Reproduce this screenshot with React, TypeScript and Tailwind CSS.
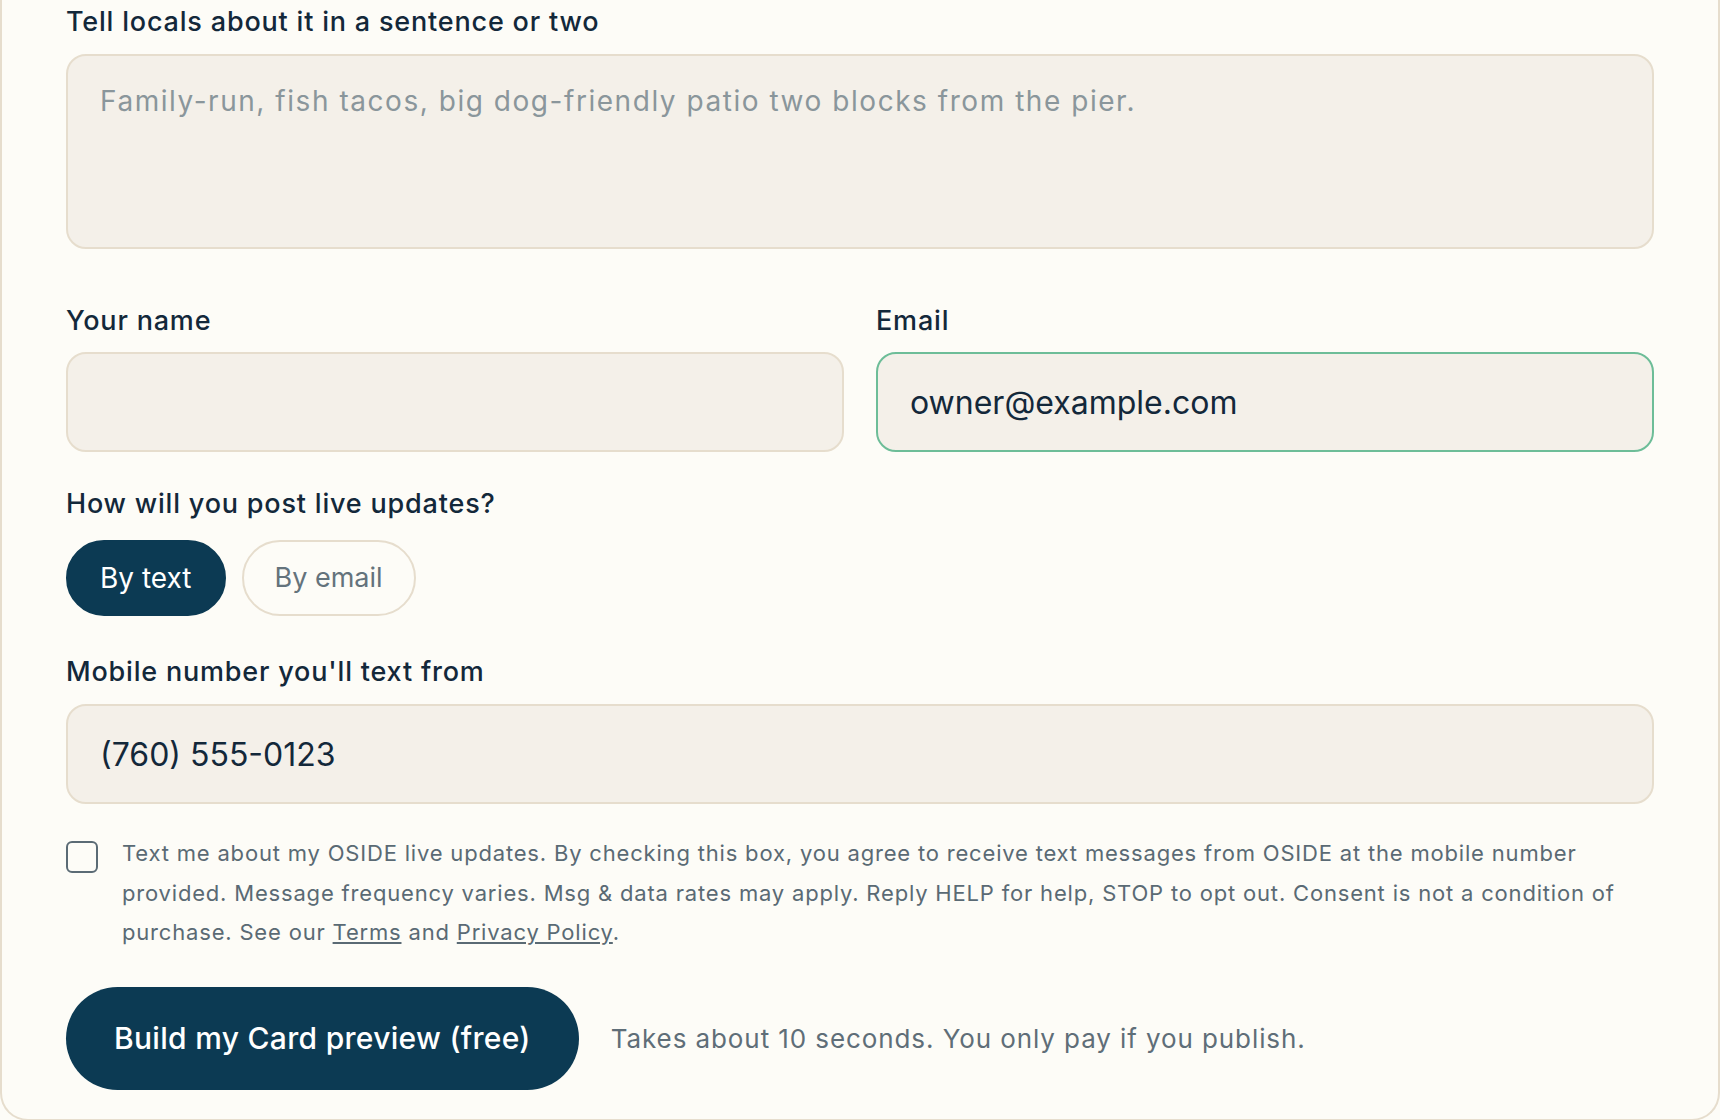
import { FC } from "react";

const Label: FC<{ text: string; className?: string }> = ({ text, className = "" }) => (
  <label className={`block text-[27px] leading-[34px] tracking-[0.03em] font-medium text-[#13283a] ${className}`}>
    {text}
  </label>
);

const fieldBase =
  "w-full h-[100px] rounded-[20px] border-2 bg-[#f4f0e9] px-8 text-[32px] text-[#13283a] outline-none";

const App: FC = () => {
  return (
    <div className="min-h-screen bg-[#fdfcf7] font-['Inter',sans-serif]">
      <div className="border-x-2 border-b-2 border-[#e6ddcd] rounded-b-[28px] bg-[#fdfcf7] px-16 pt-[5px] pb-[29px]">
        {/* description */}
        <Label text="Tell locals about it in a sentence or two" />
        <textarea
          readOnly
          placeholder="Family-run, fish tacos, big dog-friendly patio two blocks from the pier."
          className="mt-[15px] block w-full h-[195px] resize-none rounded-[20px] border-2 border-[#e6ddcd] bg-[#f4f0e9] px-8 pt-6 text-[28px] leading-[42px] tracking-[0.055em] text-[#13283a] placeholder:text-[#8a969b] outline-none"
        />

        {/* name + email */}
        <div className="mt-[55px] grid grid-cols-2 gap-8">
          <div>
            <Label text="Your name" />
            <input readOnly className={`mt-[14px] block border-[#e6ddcd] ${fieldBase}`} />
          </div>
          <div>
            <Label text="Email" />
            <input
              readOnly
              defaultValue="owner@example.com"
              className={`mt-[14px] block border-[#6dbd98] ${fieldBase}`}
            />
          </div>
        </div>

        {/* update method */}
        <Label text="How will you post live updates?" className="mt-[35px]" />
        <div className="mt-[19px] flex gap-4">
          <button className="h-[76px] rounded-full border-2 border-[#0c3a53] bg-[#0c3a53] px-8 text-[28px] text-white">
            By text
          </button>
          <button className="h-[76px] rounded-full border-2 border-[#e6ddcd] bg-transparent px-[31px] text-[27px] text-[#64737c]">
            By email
          </button>
        </div>

        {/* phone */}
        <Label text="Mobile number you'll text from" className="mt-[39px]" />
        <input
          readOnly
          defaultValue="(760) 555-0123"
          className={`mt-[15px] block border-[#e6ddcd] ${fieldBase} h-[98px]`}
        />

        {/* consent */}
        <div className="mt-[30px] flex gap-6">
          <span className="mt-[7px] h-8 w-8 shrink-0 rounded-[6px] border-2 border-[#5b6b75]" />
          <p className="text-[22px] leading-[39.5px] tracking-[0.037em] text-[#5a6a74]">
            Text me about my OSIDE live updates. By checking this box, you agree to receive text messages from
            OSIDE at the mobile number provided. Message frequency varies. Msg &amp; data rates may apply. Reply
            HELP for help, STOP to opt out. Consent is not a condition of purchase. See our{" "}
            <a href="#" className="underline underline-offset-2">Terms</a> and{" "}
            <a href="#" className="underline underline-offset-2">Privacy Policy</a>.
          </p>
        </div>

        {/* submit */}
        <div className="mt-[34px] flex items-center gap-8">
          <button className="h-[103px] rounded-full bg-[#0c3a53] px-12 text-[30px] tracking-[0.01em] font-medium text-white">
            Build my Card preview (free)
          </button>
          <span className="text-[26px] tracking-[0.035em] text-[#5f6e78]">
            Takes about 10 seconds. You only pay if you publish.
          </span>
        </div>
      </div>
    </div>
  );
};

export default App;
